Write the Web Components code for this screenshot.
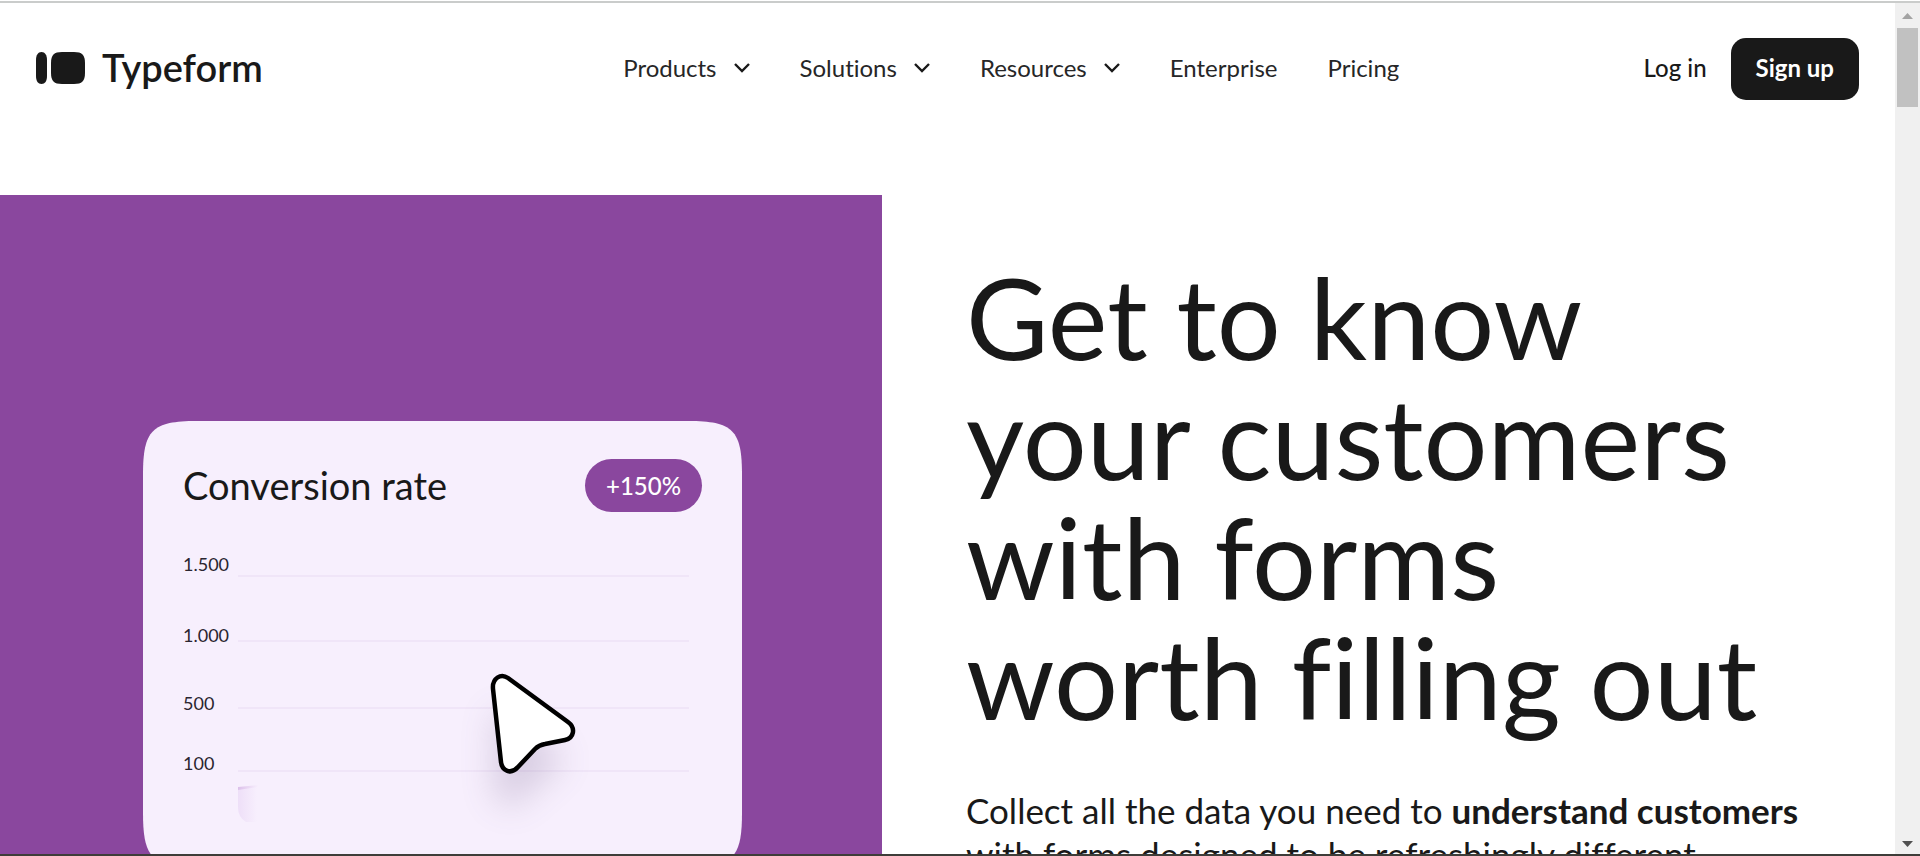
<!DOCTYPE html>
<html lang="en">
<head>
<meta charset="utf-8">
<title>Typeform</title>
<style>
  html, body { margin: 0; height: 100%; }
  body { overflow: hidden; background: #fff; color: #191919; font-family: Lato, "Open Sans", sans-serif; font-variant-ligatures: none; }
</style>
</head>
<body>
<browser-frame>
  <site-header></site-header>
  <hero-section>
    <conversion-card slot="media" heading="Conversion rate" change="+150%"></conversion-card>
    <span slot="title">Get to know<br>your customers<br>with forms<br>worth filling out</span>
    <span slot="lead">Collect all the data you need to <strong>understand customers</strong><br>with forms designed to be refreshingly different.</span>
  </hero-section>
</browser-frame>

<script>
class BaseElement extends HTMLElement {
  constructor() {
    super();
    this.attachShadow({ mode: 'open' });
  }
  connectedCallback() {
    this.shadowRoot.innerHTML = this.render();
  }
}

customElements.define('browser-frame', class extends BaseElement {
  render() {
    return `
      <style>
        :host { display: grid; grid-template: 2px 1fr / 1fr 25px; height: 100vh; box-sizing: border-box; overflow: hidden;
          padding-top: 1px; border-bottom: 2px solid #3e3d39; }
        .edge { grid-column: 1 / -1; background: #cacccb; }
        main { min-height: 0; overflow: hidden; }
      </style>
      <div class="edge"></div>
      <main><slot></slot></main>
      <scroll-rail></scroll-rail>`;
  }
});

customElements.define('scroll-rail', class extends BaseElement {
  render() {
    return `
      <style>
        :host { display: flex; flex-direction: column; align-items: center; background: #f0f0f0; }
        svg { display: block; width: 25px; height: 25px; }
        .track { flex: 1; width: 21px; }
        .thumb { height: 79px; background: #c1c1c1; }
      </style>
      <svg viewBox="0 0 25 25"><path d="M12.500 10L18 16H7z" fill="#a3a3a3"/></svg>
      <div class="track"><div class="thumb"></div></div>
      <svg viewBox="0 0 25 25"><path d="M7 12H18L12.500 18z" fill="#505050"/></svg>`;
  }
});

customElements.define('brand-logo', class extends BaseElement {
  render() {
    return `
      <style>
        :host { display: block; }
        a { display: flex; align-items: center; gap: 17px; color: inherit; text-decoration: none;
          font-size: 38px; line-height: 40px; font-weight: 600; }
        svg { width: 49px; height: 32px; }
        span { padding-bottom: 2px; }
      </style>
      <a href="#">
        <svg viewBox="0 0 49 32" fill="#191919" aria-hidden="true">
          <path d="M0 8C0 3 2 0 5.500 0S11 3 11 8V24C11 29 9 32 5.500 32S0 29 0 24Z"/>
          <path d="M15 11C15 3 18 0 26 0H38C46 0 49 3 49 11V21C49 29 46 32 38 32H26C18 32 15 29 15 21Z"/>
        </svg>
        <span>Typeform</span>
      </a>`;
  }
});

customElements.define('nav-item', class extends BaseElement {
  render() {
    const body = this.hasAttribute('menu')
      ? `<button type="button"><slot></slot><svg viewBox="0 0 16 10" aria-hidden="true"><path d="M1 1L8 8L15 1" fill="none" stroke="#191919" stroke-width="2.400"/></svg></button>`
      : `<a href="#"><slot></slot></a>`;
    return `
      <style>
        :host { display: block; }
        a, button { display: flex; align-items: center; gap: 17px; margin: 0; padding: 0; border: 0; background: none;
          font: inherit; font-variant-ligatures: none; color: #262627; text-decoration: none; cursor: pointer; }
        svg { width: 16px; height: 10px; }
      </style>${body}`;
  }
});

customElements.define('site-header', class extends BaseElement {
  render() {
    return `
      <style>
        :host { display: grid; grid-template-columns: 585fr auto 458fr; align-items: center; padding: 35px 36px;
          font-size: 24px; line-height: 30px; }
        brand-logo { padding-bottom: 2px; }
        nav { display: flex; gap: 50px; padding-bottom: 2px; }
        .account { display: flex; justify-content: flex-end; align-items: center; gap: 24px; }
        .login { padding-bottom: 2px; color: inherit; font-weight: 500; text-decoration: none; }
        .signup { box-sizing: border-box; height: 62px; padding: 0 25px 2px; border: 0; border-radius: 15px; background: #191919;
          color: #fff; font: inherit; font-weight: 700; cursor: pointer; }
      </style>
      <brand-logo></brand-logo>
      <nav>
        <nav-item menu>Products</nav-item>
        <nav-item menu>Solutions</nav-item>
        <nav-item menu>Resources</nav-item>
        <nav-item>Enterprise</nav-item>
        <nav-item>Pricing</nav-item>
      </nav>
      <div class="account">
        <a class="login" href="#">Log in</a>
        <button class="signup" type="button">Sign up</button>
      </div>`;
  }
});

customElements.define('hero-section', class extends BaseElement {
  render() {
    return `
      <style>
        :host { display: grid; grid-template-columns: 882fr 1013fr; margin-top: 60px; }
        .media { box-sizing: border-box; min-height: 800px; padding: 226px 140px 0 143px; background: #8a479e; }
        .copy { padding: 61px 0 0 84px; white-space: nowrap; }
        h1 { margin: 0; font-size: 113px; line-height: 120px; font-weight: 400; }
        p { margin: 52px 0 0; font-size: 35px; line-height: 44px; }
      </style>
      <div class="media"><slot name="media"></slot></div>
      <div class="copy">
        <h1><slot name="title"></slot></h1>
        <p><slot name="lead"></slot></p>
      </div>`;
  }
});

customElements.define('conversion-card', class extends BaseElement {
  render() {
    return `
      <style>
        :host { display: block; position: relative; box-sizing: border-box; height: 446px; padding: 38px 40px 0; }
        .plate { position: absolute; inset: 0; width: 100%; height: 100%; }
        header { position: relative; display: flex; justify-content: space-between; align-items: center; }
        h2 { margin: 0; font-size: 38px; line-height: 53px; font-weight: 400; }
        .pill { padding: 0 21px; border-radius: 27px; background: #8a479e; color: #fff; font-size: 24px; line-height: 53px; font-weight: 500; }
        .chart { position: relative; display: grid; grid-template-columns: 55px 1fr; margin-top: 40px; padding-right: 13px; }
        ul { display: grid; grid-template-rows: 71px 68px 60px 24px; margin: 0; padding: 0; list-style: none;
          font-size: 18px; line-height: 24px; color: #2a2530; }
        .grid { display: block; width: 100%; height: 290px; }
        .cursor { position: absolute; left: 319px; top: 230px; width: 150px; height: 200px; overflow: visible; }
      </style>
      <svg class="plate" viewBox="0 0 600 446" preserveAspectRatio="none" aria-hidden="true">
        <path fill="#f7effd" d="M0 54C0 9 9 0 54 0H546C591 0 600 9 600 54V392C600 437 591 446 546 446H54C9 446 0 437 0 392Z"/>
      </svg>
      <header><h2>${this.getAttribute('heading')}</h2><span class="pill">${this.getAttribute('change')}</span></header>
      <div class="chart">
        <ul><li>1.500</li><li>1.000</li><li>500</li><li>100</li></ul>
        <svg class="grid" viewBox="0 0 452 290" preserveAspectRatio="none" aria-hidden="true">
          <defs>
            <linearGradient id="bar"><stop offset="0" stop-color="#eedff8"/><stop offset="1" stop-color="#f7effd"/></linearGradient>
            <linearGradient id="cap"><stop offset="0" stop-color="#dcc0ea"/><stop offset="1" stop-color="#f7effd"/></linearGradient>
          </defs>
          <path d="M0 24H452M0 89H452M0 156H452M0 219H452" stroke="#f0e5f8" stroke-width="2"/>
          <path d="M0 237L19 234V270H8Q0 265 0 255Z" fill="url(#bar)"/>
          <path d="M0 235L20 233V235L0 238Z" fill="url(#cap)"/>
        </svg>
      </div>
      <svg class="cursor" viewBox="0 0 150 200" aria-hidden="true">
        <defs><filter id="soft" x="-80%" y="-80%" width="260%" height="260%"><feGaussianBlur stdDeviation="17"/></filter></defs>
        <path d="M32 56L92 96L102 112L74 134L50 158L32 146Z" fill="#5d4a78" opacity=".2" filter="url(#soft)"/>
        <path d="M46 27L106 71C114 77 112 87 103 89L83 93Q77 94 73 98L56 116C49 124 40 120 39 111L31 38C30 27 39 22 46 27Z"
          fill="#fff" stroke="#000" stroke-width="4.500" stroke-linejoin="round"/>
      </svg>`;
  }
});
</script>
</body>
</html>
